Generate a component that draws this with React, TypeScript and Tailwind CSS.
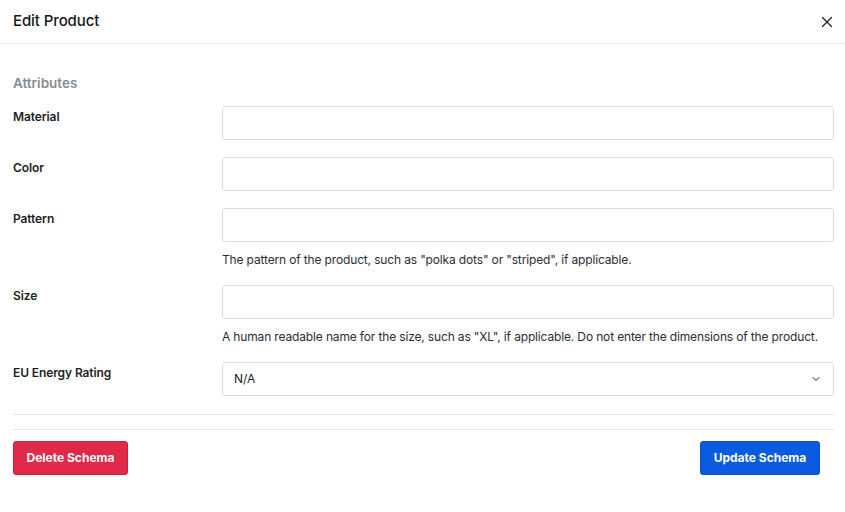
import { X, ChevronDown } from 'lucide-react'

interface FieldProps {
  label: string
  help?: string
  children?: React.ReactNode
}

function Field({ label, help, children }: FieldProps) {
  return (
    <div className="grid grid-cols-[209px_1fr]">
      <label className="pt-[3px] text-[12px] leading-[16px] font-semibold text-[#1d1f24] tracking-[-0.1px]">
        {label}
      </label>
      <div>
        {children ?? (
          <input
            type="text"
            className="block w-full h-[34px] rounded-[3px] border border-[#dddddd] bg-white px-3 text-[12px] outline-none"
          />
        )}
        {help && (
          <p className="mt-[10px] text-[12px] leading-[16px] tracking-[-0.15px] text-[#2b2d31] whitespace-nowrap">
            {help}
          </p>
        )}
      </div>
    </div>
  )
}

export default function App() {
  return (
    <div className="w-[845px] h-[512px] bg-white font-['Inter',sans-serif] text-[#1d1f24]">
      <div className="h-[44px] flex items-center justify-between pl-[13px] pr-[9px] border-b border-[#ececec]">
        <h2 className="text-[15px] font-medium text-[#15171c] tracking-[-0.1px]">Edit Product</h2>
        <button type="button" className="text-[#1d1f24]">
          <X size={18} strokeWidth={1.6} />
        </button>
      </div>

      <div className="pl-[13px] pr-[11px] pt-[29px]">
        <h3 className="text-[13.5px] leading-[20px] font-semibold text-[#868b94]">Attributes</h3>

        <div className="mt-[13px] flex flex-col gap-[17px]">
          <Field label="Material" />
          <Field label="Color" />
          <Field
            label="Pattern"
            help={'The pattern of the product, such as "polka dots" or "striped", if applicable.'}
          />
          <Field
            label="Size"
            help={'A human readable name for the size, such as "XL", if applicable. Do not enter the dimensions of the product.'}
          />
          <Field label="EU Energy Rating">
            <div className="relative">
              <select className="block w-full h-[34px] appearance-none rounded-[3px] border border-[#dddddd] bg-white pl-[11px] pr-8 text-[12px] text-[#1d1f24] outline-none">
                <option>N/A</option>
              </select>
              <ChevronDown
                size={12}
                strokeWidth={2}
                className="pointer-events-none absolute right-[12px] top-[11px] text-[#1d1f24]"
              />
            </div>
          </Field>
        </div>

        <div className="mt-[18px] border-t border-[#e6e6e6]" />
        <div className="mt-[14px] border-t border-[#e6e6e6]" />

        <div className="mt-[11px] flex items-center justify-between pr-[14px]">
          <button
            type="button"
            className="h-[34px] w-[115px] rounded-[3px] border border-[#c9203f] bg-[#e0294b] text-[12px] font-bold text-white"
          >
            Delete Schema
          </button>
          <button
            type="button"
            className="h-[34px] w-[120px] rounded-[3px] border border-[#0a4fc4] bg-[#0b5be1] text-[12px] font-bold text-white"
          >
            Update Schema
          </button>
        </div>
      </div>
    </div>
  )
}
